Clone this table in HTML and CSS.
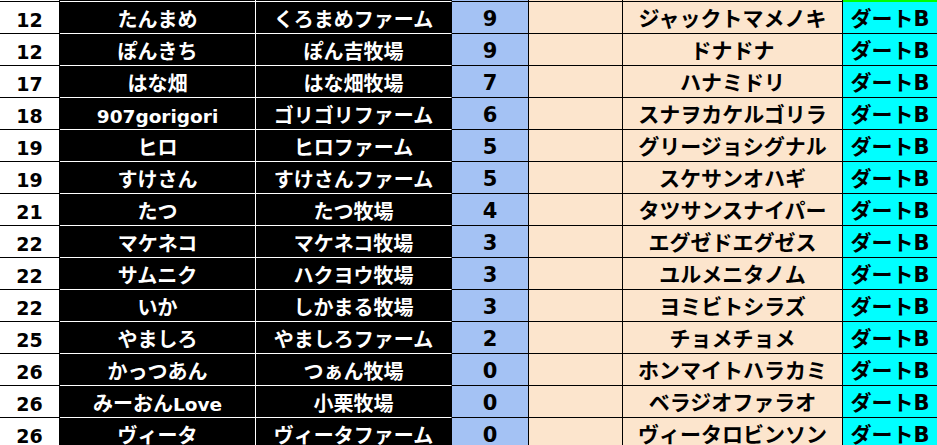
FILE: index.html
```html
<!DOCTYPE html>
<html lang="ja">
<head>
<meta charset="utf-8">
<title>ランキング</title>
<link rel="stylesheet" href="styles.css">
</head>
<body>
<div class="sheet">
  <div class="c rank sl"></div><div class="c name sl"></div><div class="c farm sl"></div><div class="c num sl"></div><div class="c blank sl"></div><div class="c horse sl"></div><div class="c type sl sel"></div>

  <div class="c rank">12</div><div class="c name">たんまめ</div><div class="c farm">くろまめファーム</div><div class="c num">9</div><div class="c blank"></div><div class="c horse">ジャックトマメノキ</div><div class="c type">ダートB</div>
  <div class="c rank">12</div><div class="c name">ぽんきち</div><div class="c farm">ぽん吉牧場</div><div class="c num">9</div><div class="c blank"></div><div class="c horse">ドナドナ</div><div class="c type">ダートB</div>
  <div class="c rank">17</div><div class="c name">はな畑</div><div class="c farm">はな畑牧場</div><div class="c num">7</div><div class="c blank"></div><div class="c horse">ハナミドリ</div><div class="c type">ダートB</div>
  <div class="c rank">18</div><div class="c name"><span class="lt">907gorigori</span></div><div class="c farm">ゴリゴリファーム</div><div class="c num">6</div><div class="c blank"></div><div class="c horse">スナヲカケルゴリラ</div><div class="c type">ダートB</div>
  <div class="c rank">19</div><div class="c name">ヒロ</div><div class="c farm">ヒロファーム</div><div class="c num">5</div><div class="c blank"></div><div class="c horse">グリージョシグナル</div><div class="c type">ダートB</div>
  <div class="c rank">19</div><div class="c name">すけさん</div><div class="c farm">すけさんファーム</div><div class="c num">5</div><div class="c blank"></div><div class="c horse">スケサンオハギ</div><div class="c type">ダートB</div>
  <div class="c rank">21</div><div class="c name">たつ</div><div class="c farm">たつ牧場</div><div class="c num">4</div><div class="c blank"></div><div class="c horse">タツサンスナイパー</div><div class="c type">ダートB</div>
  <div class="c rank">22</div><div class="c name">マケネコ</div><div class="c farm">マケネコ牧場</div><div class="c num">3</div><div class="c blank"></div><div class="c horse">エグゼドエグゼス</div><div class="c type">ダートB</div>
  <div class="c rank">22</div><div class="c name">サムニク</div><div class="c farm">ハクヨウ牧場</div><div class="c num">3</div><div class="c blank"></div><div class="c horse">ユルメニタノム</div><div class="c type">ダートB</div>
  <div class="c rank">22</div><div class="c name">いか</div><div class="c farm">しかまる牧場</div><div class="c num">3</div><div class="c blank"></div><div class="c horse">ヨミビトシラズ</div><div class="c type">ダートB</div>
  <div class="c rank">25</div><div class="c name">やましろ</div><div class="c farm">やましろファーム</div><div class="c num">2</div><div class="c blank"></div><div class="c horse">チョメチョメ</div><div class="c type">ダートB</div>
  <div class="c rank">26</div><div class="c name">かっつあん</div><div class="c farm">つぁん牧場</div><div class="c num">0</div><div class="c blank"></div><div class="c horse">ホンマイトハラカミ</div><div class="c type">ダートB</div>
  <div class="c rank">26</div><div class="c name">みーおん<span class="lt">Love</span></div><div class="c farm">小栗牧場</div><div class="c num">0</div><div class="c blank"></div><div class="c horse">ベラジオファラオ</div><div class="c type">ダートB</div>
  <div class="c rank">26</div><div class="c name">ヴィータ</div><div class="c farm">ヴィータファーム</div><div class="c num">0</div><div class="c blank"></div><div class="c horse">ヴィータロビンソン</div><div class="c type">ダートB</div>
</div>
</body>
</html>
```
FILE: styles.css
```css
html, body {
  margin: 0;
  padding: 0;
  background: #ffffff;
}

body {
  height: 445px;
  overflow: hidden;
}

.sheet {
  display: grid;
  grid-template-columns: 60px 196px 196px 77px 94px 220px 94px;
  grid-template-rows: 2px;
  grid-auto-rows: 32px;
  width: 937px;
  font-family: "DejaVu Sans", "Noto Sans CJK JP", sans-serif;
  font-weight: 700;
}

.c {
  box-sizing: border-box;
  display: flex;
  align-items: flex-end;
  justify-content: center;
  border-right: 1px solid #000;
  border-bottom: 1px solid #000;
  line-height: 1;
  white-space: nowrap;
}

.c.sl {
  padding: 0;
}

.rank {
  background: #ffffff;
  color: #000;
  font-size: 19px;
  padding-bottom: 3px;
}

.name, .farm {
  background: #000;
  color: #fff;
  font-size: 20px;
  padding-bottom: 3px;
  border-bottom-color: #fff;
}

.name {
  border-right-color: #fff;
}

.lt {
  font-size: 18.5px;
}

.num {
  background: #a4c2f4;
  color: #000;
  font-size: 21px;
  padding-bottom: 3px;
}

.blank {
  background: #fce5cd;
}

.horse {
  background: #fce5cd;
  color: #000;
  font-size: 21px;
  padding-bottom: 3px;
}

.type {
  background: #00ffff;
  color: #000;
  font-size: 21px;
  padding-bottom: 3px;
  border-right: 0;
}

.type.sel {
  background: #00ff00;
  border-bottom-color: #00ff00;
}
```
